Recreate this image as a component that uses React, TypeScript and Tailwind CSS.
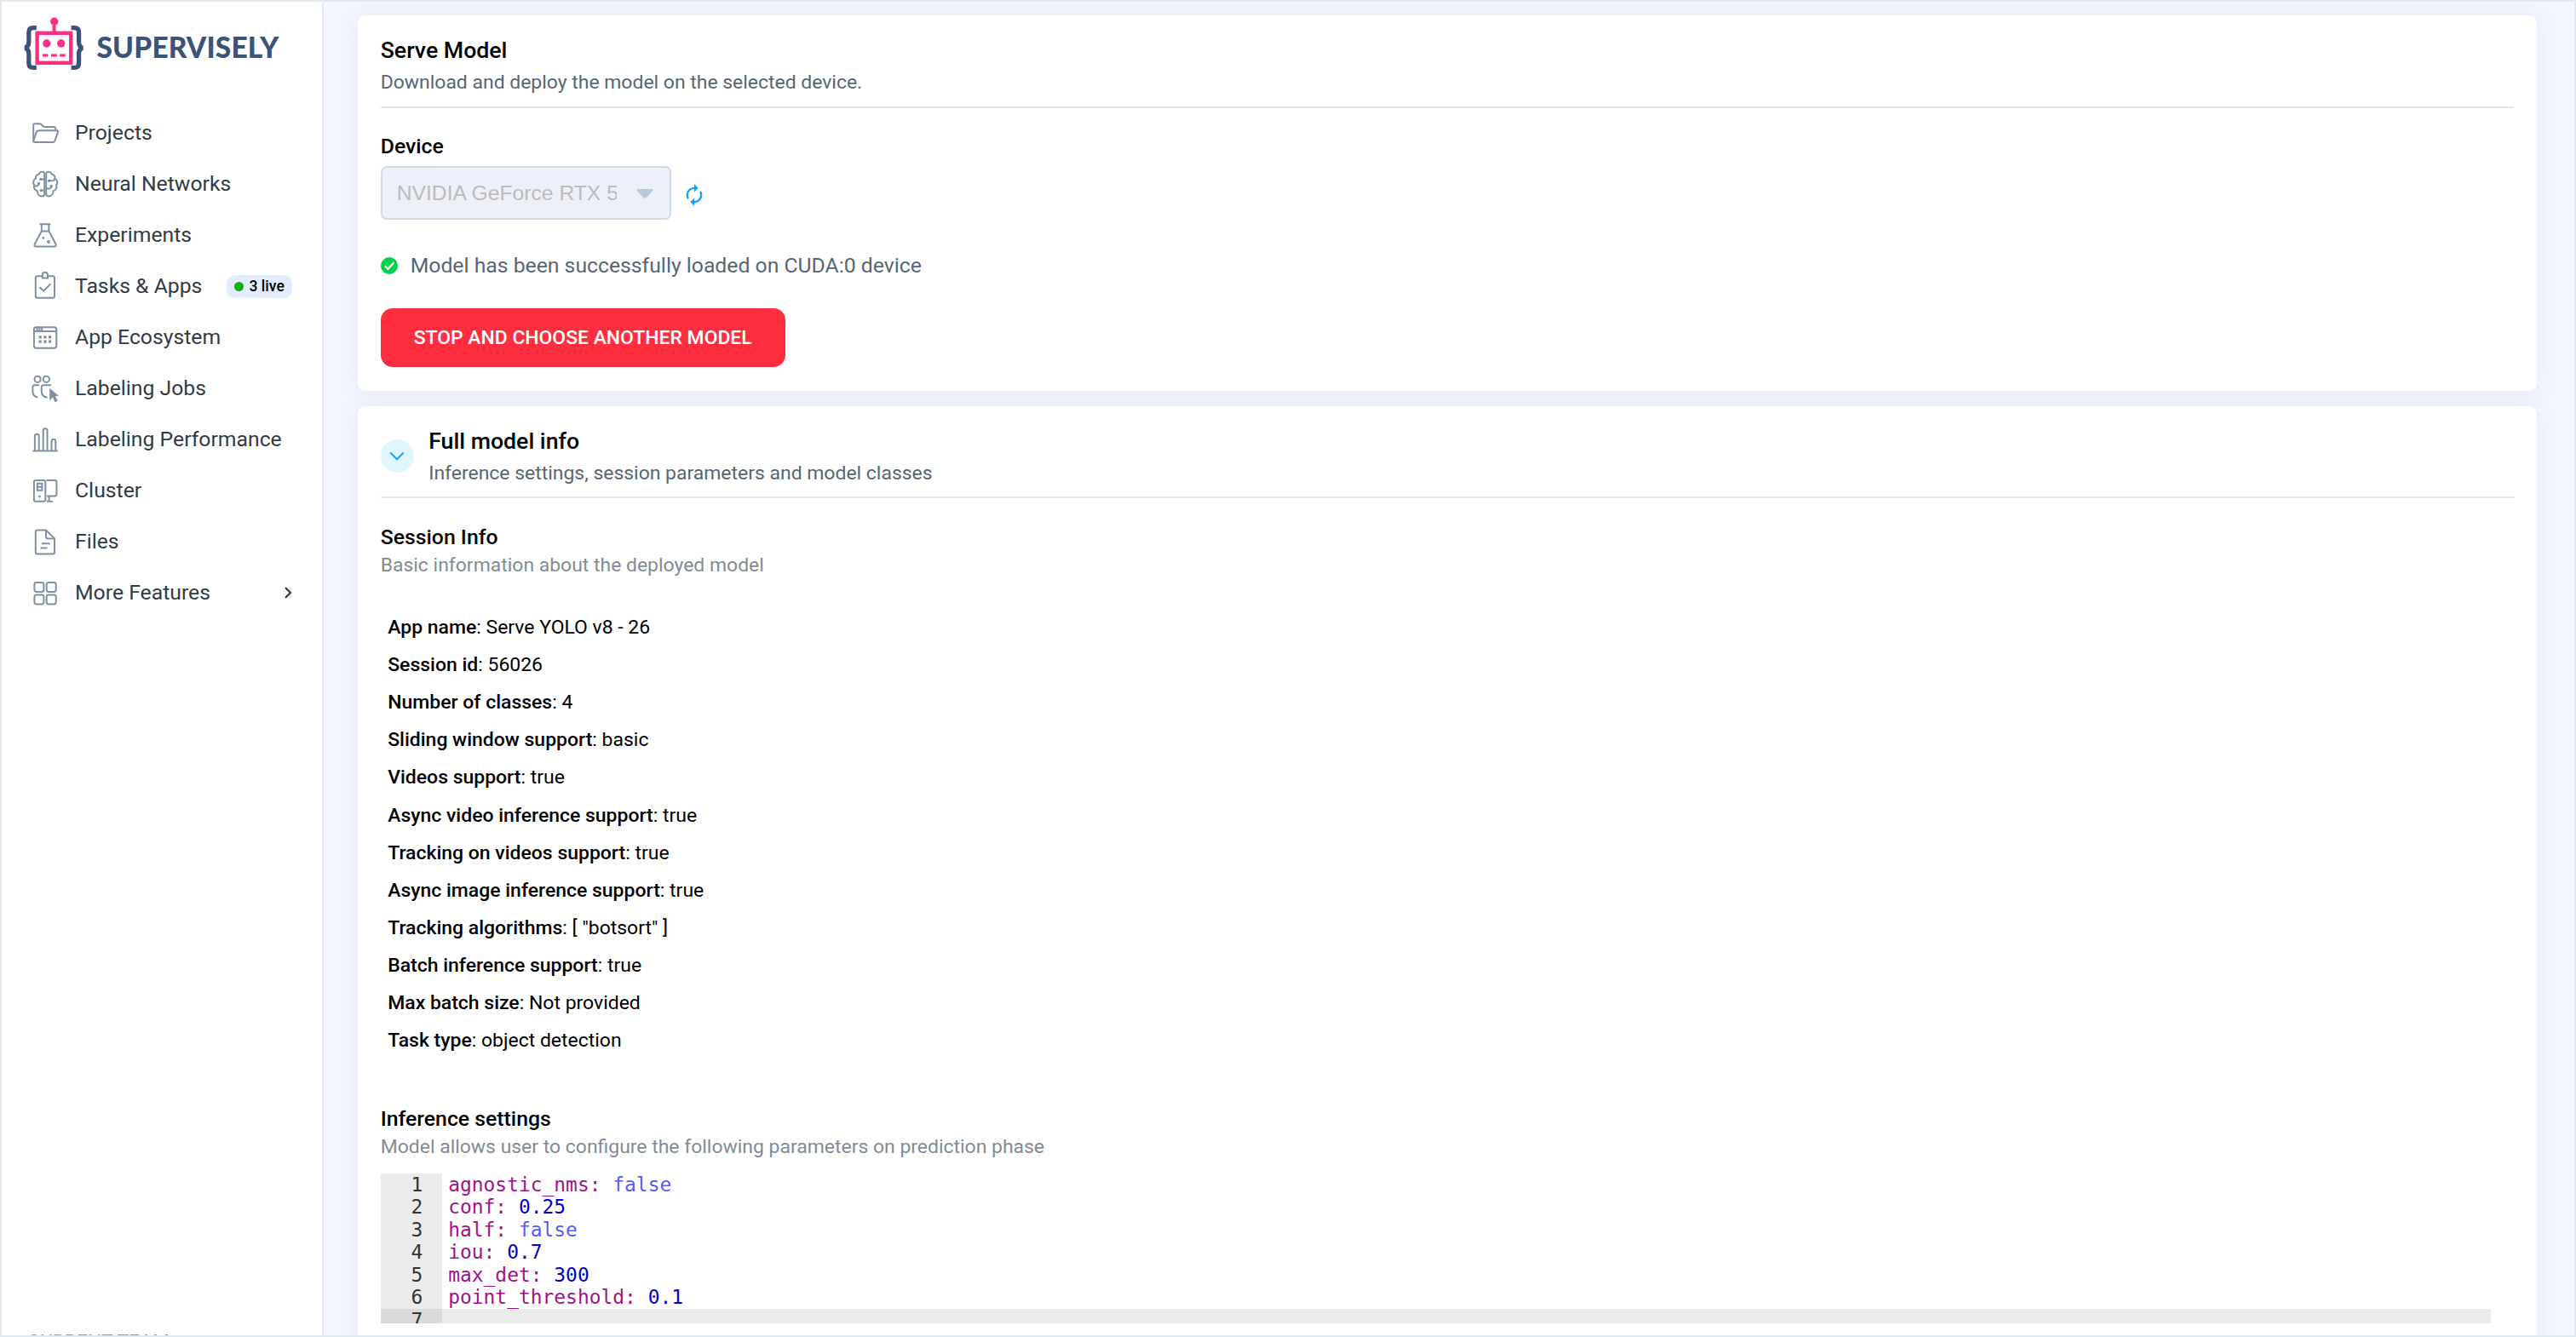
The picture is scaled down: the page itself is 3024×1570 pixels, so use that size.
import type { ReactNode } from 'react'
import { MdAutorenew } from 'react-icons/md'

const ICONS: Record<string, ReactNode> = {
  projects: (
    <>
      <path d="M2.2 25.5V7Q2.2 5.2 4 5.2H9.2Q10.3 5.2 11.2 6L13.6 8.2Q14.4 9 15.5 9H26Q28 9 28.3 11L28.8 13.2" />
      <path d="M8.6 13.2H29.6Q31.6 13.2 31 15.2L27.4 25.4Q26.8 27 25.2 27H3.6Q1.8 27 2.4 25.2L5.6 15.4Q6.4 13.2 8.6 13.2Z" />
    </>
  ),
  networks: (
    <>
      <path d="M15.2 3.6C14.4 1.2 9.6 1 8.6 4.8C5.6 5 4.4 7.4 5 9.6C1.8 11 1.2 15 3.2 17.2C2.2 20.4 3.8 23.4 6.8 24.2C7 28.2 9.4 30.6 12.2 30.6C14 30.6 15.2 29.4 15.2 27.6Z" />
      <path d="M17.2 3.6C18 1.2 22.8 1 23.8 4.8C26.8 5 28 7.4 27.4 9.6C30.6 11 31.2 15 29.2 17.2C30.2 20.4 28.6 23.4 25.6 24.2C25.4 28.2 23 30.6 20.2 30.6C18.4 30.6 17.2 29.4 17.2 27.6Z" />
      <path d="M15 10.4H11M3.2 18.4H6.4Q8.4 18.4 8.4 15.6M15 23.6H11.4M17.4 21.4H20.6Q23.2 21.4 23.2 18.6M20.8 12.2H25Q27.4 12 27.4 9.6" />
      <g fill="currentColor" stroke="none">
        <circle cx="10.8" cy="10.4" r="1.7" />
        <circle cx="8.4" cy="15.4" r="1.7" />
        <circle cx="11.2" cy="23.6" r="1.7" />
        <circle cx="20.6" cy="12.2" r="1.7" />
        <circle cx="23.2" cy="18.4" r="1.7" />
      </g>
    </>
  ),
  experiments: (
    <>
      <path d="M9.4 3.2H22.4M11.8 3.2V11.6L3.8 26.4Q2.6 29.6 5.4 29.6H26.8Q29.6 29.6 28.4 26.4L20.4 11.6V3.2M11.8 11.4H20.4" />
      <circle cx="13.8" cy="19.4" r="1.4" fill="currentColor" stroke="none" />
      <circle cx="20" cy="24" r="2" fill="currentColor" stroke="none" />
    </>
  ),
  tasks: (
    <>
      <path d="M12.6 4.2H6.8Q4.8 4.2 4.8 6.2V27.8Q4.8 29.8 6.8 29.8H25Q27 29.8 27 27.8V6.2Q27 4.2 25 4.2H19.2" />
      <path d="M12.8 6.6V2.8Q12.8 -.2 15.9 -.2Q19 -.2 19 2.8V6.6Z" />
      <path d="M9.4 17.2L14.2 21.6L22.4 13.4" />
    </>
  ),
  ecosystem: (
    <>
      <rect x="2.9" y="4.3" width="26.4" height="24.4" rx="2.6" />
      <path d="M2.9 9H29.3M6.6 4.6V9M9.4 4.6V9M12.2 4.6V9" />
      <path d="M8.6 15.9h3.2M14.4 15.9h3.2M20 15.9h3.2M8.6 21.1h3.2M14.4 21.1h3.2M20 21.1h3.2" strokeWidth="3.4" />
    </>
  ),
  jobs: (
    <>
      <circle cx="7.1" cy="5.3" r="3.6" />
      <circle cx="17.4" cy="5.3" r="3.6" />
      <path d="M9 12.2H3.8Q1.4 12.2 1.4 14.6V19.6Q1.4 25.6 7.2 26.6" />
      <path d="M23 12.2H14.2Q11.8 12.2 11.8 14.6V19.6Q11.8 26.2 18.6 26.8" />
      <path d="M21.2 15.8L32 25H28L30.6 31L27.4 32.2L25 26.6L21.2 30.4Z" fill="currentColor" stroke="none" />
    </>
  ),
  performance: (
    <>
      <path d="M1.3 29.5H30.8" />
      <path d="M3.9 29V12.2Q3.9 9.8 6.3 9.8Q8.7 9.8 8.7 12.2V29M13.7 29V5.6Q13.7 3.2 16.1 3.2Q18.5 3.2 18.5 5.6V29M23.5 29V18.2Q23.5 15.8 25.9 15.8Q28.3 15.8 28.3 18.2V29" />
    </>
  ),
  cluster: (
    <>
      <rect x="2.9" y="4" width="13.4" height="24.8" rx="2" />
      <rect x="6.8" y="7.8" width="5.6" height="8" />
      <path d="M6.8 11.8H12.4M17.6 4H27.4Q29.4 4 29.4 6V20.4Q29.4 22.4 27.4 22.4H18M20.6 22.4V28.6M17.8 28.7H25" />
      <circle cx="9.4" cy="23" r="1.4" fill="currentColor" stroke="none" />
    </>
  ),
  files: (
    <>
      <path d="M17 2.6H6.8Q4.8 2.6 4.8 4.6V28.4Q4.8 30.4 6.8 30.4H25Q27 30.4 27 28.4V12.4Z" />
      <path d="M17 2.6V10.4Q17 12.4 19 12.4H27M11.8 18.2H21.6M10.6 23.4H18.4" />
    </>
  ),
  more: (
    <>
      <rect x="3.4" y="3.9" width="11" height="11" rx="2.4" />
      <rect x="17.7" y="3.9" width="11" height="11" rx="2.4" />
      <rect x="3.4" y="18.4" width="11" height="11" rx="2.4" />
      <rect x="17.7" y="18.4" width="11" height="11" rx="2.4" />
    </>
  ),
}

const NAV = [
  { icon: 'projects', label: 'Projects' },
  { icon: 'networks', label: 'Neural Networks' },
  { icon: 'experiments', label: 'Experiments' },
  { icon: 'tasks', label: 'Tasks & Apps', live: '3 live' },
  { icon: 'ecosystem', label: 'App Ecosystem' },
  { icon: 'jobs', label: 'Labeling Jobs' },
  { icon: 'performance', label: 'Labeling Performance' },
  { icon: 'cluster', label: 'Cluster' },
  { icon: 'files', label: 'Files' },
  { icon: 'more', label: 'More Features', expandable: true },
]

const SESSION_INFO = [
  ['App name', 'Serve YOLO v8 - 26'],
  ['Session id', '56026'],
  ['Number of classes', '4'],
  ['Sliding window support', 'basic'],
  ['Videos support', 'true'],
  ['Async video inference support', 'true'],
  ['Tracking on videos support', 'true'],
  ['Async image inference support', 'true'],
  ['Tracking algorithms', '[ "botsort" ]'],
  ['Batch inference support', 'true'],
  ['Max batch size', 'Not provided'],
  ['Task type', 'object detection'],
]

const SETTINGS = [
  ['agnostic_nms', 'false'],
  ['conf', '0.25'],
  ['half', 'false'],
  ['iou', '0.7'],
  ['max_det', '300'],
  ['point_threshold', '0.1'],
]

function Logo() {
  return (
    <div className="flex items-center h-[66px] mt-4 pl-[22px] shrink-0">
      <svg className="w-[78px] h-[66px] shrink-0" viewBox="24 18 78 66" fill="none">
        <path
          d="M42.8 32.6H39Q33.8 32.6 33.8 37.8V49.4Q33.8 54.6 29.6 56.2Q33.8 57.8 33.8 63V74.2Q33.8 79.4 39 79.4H42.8M83.6 32.6H87.4Q92.6 32.6 92.6 37.8V49.4Q92.6 54.6 96.8 56.2Q92.6 57.8 92.6 63V74.2Q92.6 79.4 87.4 79.4H83.6"
          stroke="#3d5278"
          strokeWidth="5.2"
          strokeLinejoin="bevel"
        />
        <rect x="43.6" y="38.8" width="39.6" height="35" stroke="#ff2d86" strokeWidth="4.4" />
        <path d="M63.5 25V38" stroke="#ff2d86" strokeWidth="4" />
        <g fill="#ff2d86">
          <circle cx="63.7" cy="25.2" r="4.7" />
          <circle cx="54.8" cy="51" r="4.7" />
          <circle cx="71.7" cy="51" r="4.7" />
          <rect x="50" y="63.4" width="6.4" height="3.2" />
          <rect x="60" y="63.4" width="6.8" height="3.2" />
          <rect x="70.2" y="63.4" width="6.6" height="3.2" />
        </g>
      </svg>
      <span className="ml-[11.5px] mt-[7px] font-['Lato'] font-black text-[33.5px] leading-10 tracking-[0.15px] text-[#3d5278]">
        SUPERVISELY
      </span>
    </div>
  )
}

function Sidebar() {
  return (
    <aside className="flex flex-col w-[378px] shrink-0 overflow-hidden bg-white border-r-2 border-[#e4ebf5]">
      <Logo />
      <nav className="flex flex-col mt-[42px]">
        {NAV.map(({ icon, label, live, expandable }) => (
          <div key={label} className="flex items-center h-[60px] pl-[35px] pr-[35.5px] text-[24.75px] text-[#323a47]">
            <svg
              className="size-8 shrink-0 overflow-visible text-[#8090a4]"
              viewBox="0 0 32 32"
              fill="none"
              stroke="currentColor"
              strokeWidth="2"
            >
              {ICONS[icon]}
            </svg>
            <span className="ml-[19px] whitespace-nowrap">{label}</span>
            {live && (
              <span className="flex items-center ml-auto mt-[1px] w-[77px] h-[27px] pl-[9px] rounded-[10px] bg-[#e3ecff] text-[17.6px] font-medium text-black">
                <span className="size-[11px] mr-[7px] rounded-full bg-[#07b507]" />
                {live}
              </span>
            )}
            {expandable && (
              <svg className="w-2.5 h-3.5 ml-auto" viewBox="0 0 10 14" fill="none" stroke="currentColor" strokeWidth="2.2">
                <path d="M2 1L8 7L2 13" />
              </svg>
            )}
          </div>
        ))}
      </nav>
      <div className="mt-[835px] pl-[30px] shrink-0 text-[22.9px] leading-[30px] text-[#8b95a3]">CURRENT TEAM</div>
    </aside>
  )
}

function Card({ children, className = '' }: { children: ReactNode; className?: string }) {
  return (
    <section
      className={`px-[26.7px] pt-[26px] rounded-[9px] bg-white shadow-[0_1px_24px_rgba(90,100,170,0.085)] shrink-0 ${className}`}
    >
      {children}
    </section>
  )
}

function Heading({ title, text }: { title: string; text: string }) {
  return (
    <div>
      <h2 className="text-[26.7px] leading-[30px] font-medium text-black">{title}</h2>
      <p className="mt-2 text-[22.95px] leading-[30px] text-[#566676]">{text}</p>
    </div>
  )
}

function Field({ title, text }: { title: string; text?: string }) {
  return (
    <div>
      <h3 className="text-[24.8px] leading-[30px] font-medium text-black">{title}</h3>
      {text && <p className="mt-[3px] text-[22.95px] leading-[30px] text-[#828b96]">{text}</p>}
    </div>
  )
}

function ServeModel() {
  return (
    <Card className="pb-7">
      <div className="pb-[13px] mb-[30px] border-b-2 border-[#e2e7ef]">
        <Heading title="Serve Model" text="Download and deploy the model on the selected device." />
      </div>
      <Field title="Device" />
      <div className="flex items-center mt-2">
        <div className="flex items-center w-[341px] h-[63px] pl-[17px] rounded-[7px] border-2 border-[#cfdce8] bg-[#edf0f8]">
          <span className="w-[258px] overflow-hidden whitespace-nowrap font-['Liberation_Sans'] text-[24.7px] text-[#bbbbbb]">
            NVIDIA GeForce RTX 5090
          </span>
          <svg className="w-5 h-[11px] ml-[23px] mt-[1px]" viewBox="0 0 20 11" fill="#b8c9db">
            <path d="M1.5 0H18.5Q20.4 .4 19.2 2L12 9.8Q10 11.6 8 9.8L.8 2Q-.4 .4 1.5 0Z" />
          </svg>
        </div>
        <MdAutorenew className="size-7 ml-[13px] mt-1 text-[#0ba2ff]" />
      </div>
      <div className="flex items-center mt-[39px] h-[30px]">
        <svg className="size-5 -mt-[1px]" viewBox="0 0 20 20" fill="none">
          <circle cx="10" cy="10" r="10" fill="#05d04c" />
          <path d="M5 10.4L8.4 13.8L15.4 6.2" stroke="#fff" strokeWidth="2.2" />
        </svg>
        <span className="ml-[15px] text-[24.75px] leading-[30px] text-[#566676]">
          Model has been successfully loaded on CUDA:0 device
        </span>
      </div>
      <button
        type="button"
        className="flex items-center justify-center mt-[35px] w-[475px] h-[69px] pt-[1px] rounded-[14px] bg-[#ff2e3f] text-[22.92px] font-medium text-white"
      >
        STOP AND CHOOSE ANOTHER MODEL
      </button>
    </Card>
  )
}

function Editor() {
  return (
    <div className="mt-[16.3px] mr-[27px] h-[176px] overflow-hidden font-['DejaVu_Sans_Mono',monospace] text-[22.92px] leading-[26.45px]">
      {[...SETTINGS, null].map((row, i) => (
        <div key={i} className={`flex h-[26.45px] ${row ? '' : 'bg-[#ebebeb]'}`}>
          <span
            className={`w-[72px] pr-[22.5px] shrink-0 text-right text-[#333333] ${row ? 'bg-[#ebebeb]' : 'bg-[#dadada]'}`}
          >
            {i + 1}
          </span>
          {row && (
            <span className="pl-[7.5px] whitespace-pre text-[#a0128a]">
              {row[0]}:{' '}
              <span className={row[1] === 'false' ? 'text-[#585cf6]' : 'text-[#0000cd]'}>{row[1]}</span>
            </span>
          )}
        </div>
      ))}
    </div>
  )
}

function ModelInfo() {
  return (
    <Card className="h-[1200px]">
      <div className="flex items-center pb-3 mb-[31px] border-b-2 border-[#e2e7ef]">
        <span className="flex items-center justify-center size-[39px] -mt-[3px] mr-[17.5px] rounded-full bg-[#dff6fe]">
          <svg className="w-[18px] h-[11px]" viewBox="0 0 18 11" fill="none" stroke="#1ea4fb" strokeWidth="2.1">
            <path d="M1.2 1.6L9 9.2L16.8 1.6" />
          </svg>
        </span>
        <Heading title="Full model info" text="Inference settings, session parameters and model classes" />
      </div>
      <Field title="Session Info" text="Basic information about the deployed model" />
      <dl className="mt-[36.2px] mb-[54.8px] pl-[8.5px] text-[22.97px] leading-[44.06px] text-black">
        {SESSION_INFO.map(([name, value]) => (
          <div key={name}>
            <dt className="inline font-medium">{name}</dt>
            <dd className="inline">: {value}</dd>
          </div>
        ))}
      </dl>
      <Field title="Inference settings" text="Model allows user to configure the following parameters on prediction phase" />
      <Editor />
    </Card>
  )
}

export default function App() {
  return (
    <div className="flex w-[3024px] h-[1570px] overflow-hidden border-2 border-[#e1e8ee] bg-[#f3f6ff] font-['Roboto',sans-serif]">
      <Sidebar />
      <main className="flex flex-col flex-1 gap-[18px] pt-4 pl-10 pr-11 overflow-hidden">
        <ServeModel />
        <ModelInfo />
      </main>
    </div>
  )
}
